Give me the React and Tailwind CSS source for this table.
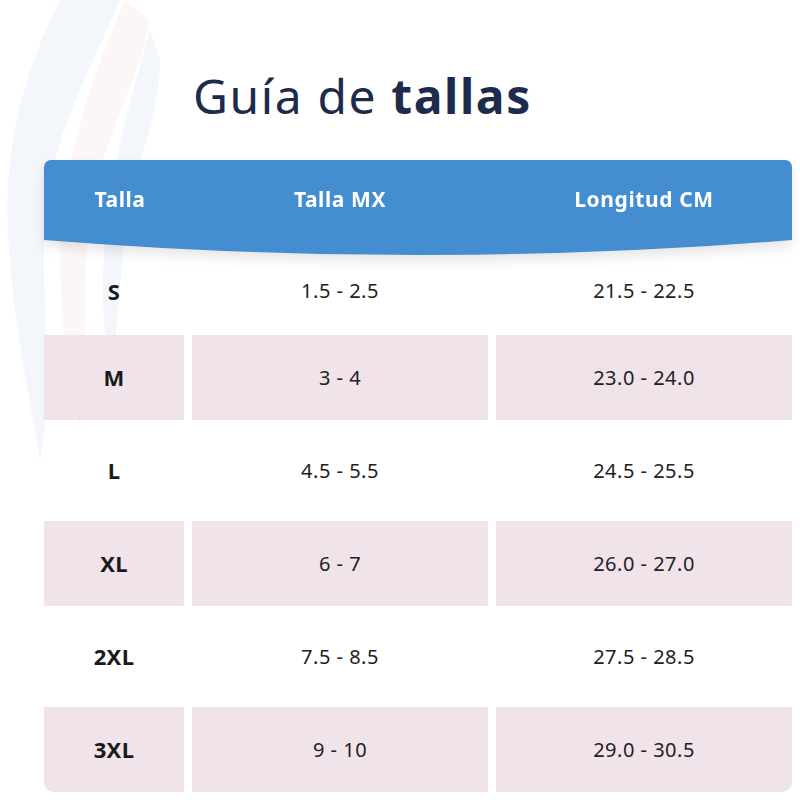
import React from "react";

const rows = [
  { s: "S", mx: "1.5 - 2.5", cm: "21.5 - 22.5", pink: false },
  { s: "M", mx: "3 - 4", cm: "23.0 - 24.0", pink: true },
  { s: "L", mx: "4.5 - 5.5", cm: "24.5 - 25.5", pink: false },
  { s: "XL", mx: "6 - 7", cm: "26.0 - 27.0", pink: true },
  { s: "2XL", mx: "7.5 - 8.5", cm: "27.5 - 28.5", pink: false },
  { s: "3XL", mx: "9 - 10", cm: "29.0 - 30.5", pink: true, last: true },
];

export default function App() {
  return (
    <div
      className="relative w-[800px] h-[800px] bg-white overflow-hidden"
      style={{ fontFamily: '"Noto Sans", "DejaVu Sans", sans-serif' }}
    >
      <svg className="absolute left-0 top-0" width="220" height="520" viewBox="0 0 220 520">
        <path d="M60 0 C20 80 0 160 10 260 C15 330 30 400 40 460 C55 380 40 300 45 220 C50 140 90 70 120 0 Z" fill="#f3f6fb" />
        <path d="M125 0 C95 70 70 140 62 220 C55 300 70 380 80 430 C90 350 80 290 90 220 C100 140 140 80 150 20 Z" fill="#fcf6f7" />
        <path d="M150 30 C130 100 110 170 105 240 C100 300 105 340 110 380 C120 320 118 270 130 210 C140 150 160 110 160 60 Z" fill="#f3f6fb" />
      </svg>

      <div className="relative pt-[66px] pl-[193px] h-[160px]">
        <h1 className="text-[48px] leading-[60px] text-[#1d2b4d] tracking-[1.6px]">
          <span className="font-normal">Guía de </span>
          <span className="font-bold">tallas</span>
        </h1>
      </div>

      <div className="relative ml-[44px] w-[748px] flex flex-col">
        <div className="drop-shadow-[0_6px_6px_rgba(0,0,0,0.10)]">
          <div className="h-[80px] bg-[#438dd0] rounded-t-[7px] grid grid-cols-[140px_296px_296px] gap-2 items-center text-white font-bold text-[21px] tracking-[0.6px]">
            <div className="text-center pl-[12px]">Talla</div>
            <div className="text-center">Talla MX</div>
            <div className="text-center">Longitud CM</div>
          </div>
          <svg className="block" width="748" height="15" viewBox="0 0 748 15" preserveAspectRatio="none">
            <path d="M0 0 H748 Q374 30 0 0 Z" fill="#438dd0" />
          </svg>
        </div>

        <div className="flex flex-col gap-2">
          {rows.map((r, i) => (
            <div
              key={r.s}
              className={`grid grid-cols-[140px_296px_296px] gap-2 ${i === 0 ? "h-[72px]" : "h-[85px]"}`}
            >
              <div
                className={`flex items-center justify-center font-bold text-[22px] tracking-[0.3px] text-[#1a1a1a] ${r.pink ? "bg-[#f0e4ea]" : ""} ${r.last ? "rounded-bl-[10px]" : ""}`}
              >
                {r.s}
              </div>
              <div
                className={`flex items-center justify-center text-[20px] tracking-[0.5px] text-[#222] ${r.pink ? "bg-[#f0e4ea]" : ""}`}
              >
                {r.mx}
              </div>
              <div
                className={`flex items-center justify-center text-[20px] tracking-[0.5px] text-[#222] ${r.pink ? "bg-[#f0e4ea]" : ""} ${r.last ? "rounded-br-[10px]" : ""}`}
              >
                {r.cm}
              </div>
            </div>
          ))}
        </div>
      </div>
    </div>
  );
}
